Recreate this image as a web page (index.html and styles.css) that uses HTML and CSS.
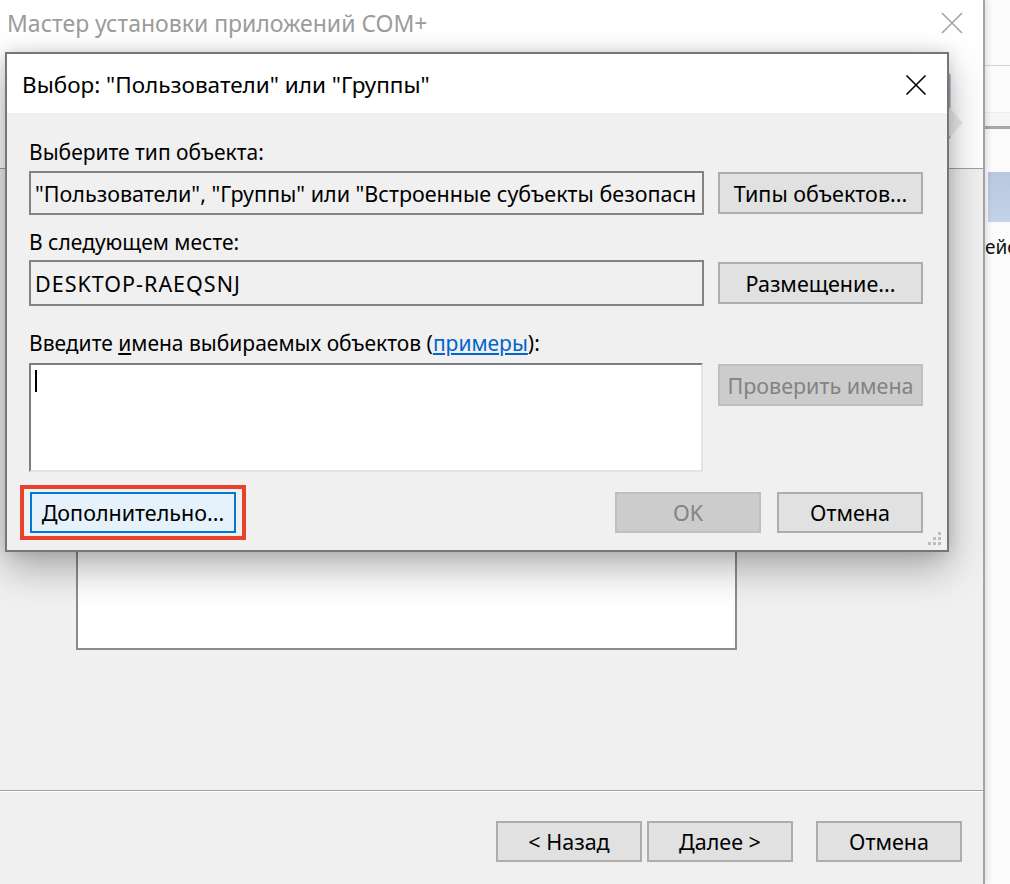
FILE: index.html
```html
<!DOCTYPE html>
<html lang="ru">
<head>
<meta charset="utf-8">
<title>Выбор: Пользователи или Группы</title>
<link rel="stylesheet" href="styles.css">
</head>
<body>
<div class="desk">
  <div class="wizard">
    <div class="wz-title">
      <span class="wz-title-text">Мастер установки приложений COM+</span>
      <svg class="wz-close" width="22" height="22" viewBox="0 0 22 22"><path d="M1 1L21 21M21 1L1 21" stroke="#a3a3a3" stroke-width="1.6" fill="none"/></svg>
    </div>
    <div class="wz-header">
      <svg class="wz-icon" width="70" height="90" viewBox="0 0 70 90">
        <path d="M12 20 L40 6 L48 4 L52 8 L52 70 L40 82 L12 82 Z" fill="#e6e8ef" stroke="#9aa3bb" stroke-width="3"/>
        <path d="M44 4 L50 2 L54 10 L48 12 Z" fill="#a9b3cf"/>
        <path d="M52 40 L66 56 L52 70 Z" fill="#ececec"/>
      </svg>
    </div>
    <div class="wz-body">
      <div class="wz-list"></div>
    </div>
    <div class="wz-footer">
      <button class="btn wz-btn">&lt; Назад</button>
      <button class="btn wz-btn">Далее &gt;</button>
      <button class="btn wz-btn wz-cancel">Отмена</button>
    </div>
  </div>

  <div class="side">
    <div class="side-a"></div>
    <div class="side-b"></div>
    <div class="side-c"></div>
    <div class="side-d"></div>
    <div class="side-bar"></div>
    <div class="side-text">ейс</div>
  </div>

  <div class="dialog">
    <div class="dlg-title">
      <span class="dlg-title-text">Выбор: "Пользователи" или "Группы"</span>
      <svg class="dlg-close" width="22" height="22" viewBox="0 0 22 22"><path d="M1.5 1.5L20.5 20.5M20.5 1.5L1.5 20.5" stroke="#000" stroke-width="1.6" fill="none"/></svg>
    </div>
    <div class="dlg-body">
      <div class="lbl">Выберите тип объекта:</div>
      <div class="row">
        <div class="field"><span class="field-text">"Пользователи", "Группы" или "Встроенные субъекты безопасности"</span></div>
        <button class="btn side-btn">Типы объектов...</button>
      </div>
      <div class="lbl lbl-2">В следующем месте:</div>
      <div class="row row-2">
        <div class="field field-2"><span class="field-text field-caps">DESKTOP-RAEQSNJ</span></div>
        <button class="btn side-btn">Размещение...</button>
      </div>
      <div class="lbl lbl-3">Введите <u>и</u>мена выбираемых объектов (<a class="link" href="#">примеры</a>):</div>
      <div class="row row-3">
        <div class="entry"><div class="caret"></div></div>
        <button class="btn side-btn btn-disabled">Проверить имена</button>
      </div>
      <div class="bottom">
        <span class="mark"><button class="btn btn-focus">Дополнительно...</button></span>
        <span class="spacer"></span>
        <button class="btn btn-disabled btn-ok">OK</button>
        <button class="btn btn-cancel">Отмена</button>
      </div>
    </div>
    <svg class="grip" width="16" height="16" viewBox="0 0 16 16">
      <rect x="11" y="1" width="3" height="3" fill="#bdbdbd"/>
      <rect x="6" y="6" width="3" height="3" fill="#bdbdbd"/>
      <rect x="11" y="6" width="3" height="3" fill="#bdbdbd"/>
      <rect x="1" y="11" width="3" height="3" fill="#bdbdbd"/>
      <rect x="6" y="11" width="3" height="3" fill="#bdbdbd"/>
      <rect x="11" y="11" width="3" height="3" fill="#bdbdbd"/>
    </svg>
  </div>
</div>
</body>
</html>
```

FILE: styles.css
```css
* { box-sizing: border-box; }
html, body { margin: 0; padding: 0; }
body {
  font-family: "Noto Sans", "Open Sans", sans-serif;
  background: #ffffff;
}
.desk {
  position: relative;
  display: flex;
  width: 1010px;
  height: 884px;
  overflow: hidden;
}

/* ---------- generic button ---------- */
.btn {
  font-family: "Noto Sans", "Open Sans", sans-serif;
  font-size: 21.5px;
  color: #000;
  background: #e1e1e1;
  border: 2px solid #adadad;
  padding: 0;
  margin: 0;
  white-space: nowrap;
}

/* ---------- wizard (background window) ---------- */
.wizard {
  width: 985px;
  height: 884px;
  flex: none;
  display: flex;
  flex-direction: column;
  border-right: 2px solid #a4a4a4;
  background: #f0f0f0;
  box-shadow: 2px 0 6px rgba(0,0,0,0.12);
  z-index: 1;
}
.wz-title {
  height: 45px;
  background: #ffffff;
  display: flex;
  align-items: center;
  justify-content: space-between;
  padding: 0 20px 0 7px;
}
.wz-title-text {
  font-size: 23px;
  color: #9c9c9c;
}
.wz-close { display: block; }
.wz-header {
  height: 124px;
  background: #ffffff;
  border-bottom: 1px solid #a0a0a0;
  display: flex;
  justify-content: flex-end;
  align-items: flex-start;
  padding: 22px 16px 0 0;
}
.wz-icon { display: block; }
.wz-body {
  flex: 1;
  padding: 230px 0 0 76px;
}
.wz-list {
  width: 661px;
  height: 251px;
  background: #ffffff;
  border: 2px solid #8b8b93;
}
.wz-footer {
  height: 94px;
  flex: none;
  border-top: 1px solid #a0a0a0;
  box-shadow: inset 0 1px 0 #ffffff;
  display: flex;
  justify-content: flex-end;
  align-items: flex-start;
  padding: 30px 21px 0 0;
  gap: 5px;
}
.wz-footer .wz-btn {
  width: 146px;
  height: 41px;
}
.wz-footer .wz-cancel { margin-left: 18px; }

/* ---------- window on the right ---------- */
.side {
  flex: 1;
  background: #fbfbfb;
  overflow: hidden;
}
.side-a { height: 66px; border-bottom: 1px solid #d4d4d4; }
.side-b { height: 47px; border-bottom: 1px solid #ececec; }
.side-c { height: 16px; border-bottom: 3px solid #a7a7a7; background: #f6f6f6; }
.side-d { height: 43px; }
.side-bar {
  height: 50px;
  margin-left: 3px;
  background: linear-gradient(#b7c7df, #c5d3e8);
}
.side-text {
  margin: 12px 0 0 0;
  font-size: 19px;
  color: #111;
  white-space: nowrap;
}

/* ---------- dialog ---------- */
.dialog {
  position: absolute;
  left: 5px;
  top: 52px;
  width: 944px;
  height: 500px;
  background: #f0f0f0;
  border: 2px solid #767676;
  box-shadow: 0 16px 36px rgba(0,0,0,0.3), 0 0 14px rgba(0,0,0,0.12);
  z-index: 5;
}
.dlg-title {
  height: 59px;
  background: #ffffff;
  display: flex;
  align-items: center;
  justify-content: space-between;
  padding: 2px 20px 0 15px;
}
.dlg-title-text {
  font-size: 22.5px;
  color: #000;
}
.dlg-close { display: block; }
.dlg-body {
  padding: 27px 24px 0 22px;
}
.lbl {
  height: 24px;
  line-height: 24px;
  font-size: 21px;
  color: #000;
  white-space: nowrap;
}
.lbl-2 { margin-top: 15px; }
.lbl-3 { margin-top: 25px; }
.link { color: #0066cc; text-decoration: underline; }
.row {
  display: grid;
  grid-template-columns: 675px 205px;
  column-gap: 14px;
  align-items: center;
  margin-top: 7px;
}
.row-2 { margin-top: 6px; }
.row-3 { margin-top: 8px; align-items: start; }
.field {
  height: 44px;
  border: 2px solid #838383;
  background: #f0f0f0;
  padding: 0 5px 0 4px;
  display: flex;
  align-items: center;
  overflow: hidden;
}
.field-2 { height: 46px; }
.field-text {
  display: block;
  flex: 1;
  min-width: 0;
  overflow: hidden;
  font-size: 21.5px;
  color: #000;
  white-space: nowrap;
}
.field-caps { letter-spacing: 1px; }
.entry {
  height: 109px;
  width: 674px;
  background: #ffffff;
  border-top: 2px solid #7c7c7c;
  border-left: 2px solid #7c7c7c;
  border-right: 2px solid #e3e3e3;
  border-bottom: 2px solid #e3e3e3;
  padding: 5px 0 0 4px;
}
.caret {
  width: 2px;
  height: 22px;
  background: #000;
}

.side-btn { height: 42px; }
.row-3 .side-btn { margin-top: 1px; }
.btn-disabled {
  background: #cccccc;
  border-color: #bfbfbf;
  color: #838383;
}
.bottom {
  display: flex;
  align-items: center;
  margin-top: 13px;
  gap: 16px;
}
.mark {
  display: block;
  margin-left: -9px;
  border: 4px solid #e8412c;
  padding: 3px 6px;
}
.btn-focus {
  display: block;
  width: 206px;
  height: 41px;
  background: #e5f1fb;
  border-color: #0078d7;
}
.spacer { flex: 1; }
.btn-ok, .btn-cancel {
  width: 146px;
  height: 41px;
}
.grip {
  position: absolute;
  right: 4px;
  bottom: 3px;
}
```
